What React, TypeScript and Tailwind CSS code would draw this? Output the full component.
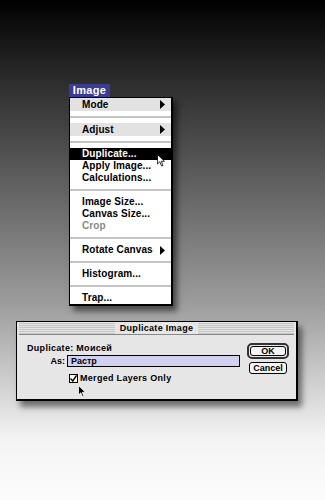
import React from 'react';

const font = { fontFamily: '"Liberation Sans", "Noto Sans", sans-serif' };

function Arrow() {
  return (
    <svg width="5" height="9" viewBox="0 0 5 9" className="ml-auto mr-[6px] shrink-0">
      <path d="M0 0 L5 4.5 L0 9 Z" fill="#000" />
    </svg>
  );
}

function Sep() {
  return (
    <div className="flex flex-col">
      <div className="h-[5px]" />
      <div className="h-[2px] bg-[#c4c4c4]" />
      <div className="h-[5px]" />
    </div>
  );
}

function Item({ label, sub, dim }: { label: string; sub?: boolean; dim?: boolean }) {
  return (
    <div className={`flex items-center h-[12px] pl-[12px] text-[10px] font-bold leading-none tracking-[0.1px] ${dim ? 'text-[#8a8a8a]' : 'text-black'}`}>
      <span>{label}</span>
      {sub && <Arrow />}
    </div>
  );
}

function Cursor({ white }: { white?: boolean }) {
  return (
    <svg width="9" height="13" viewBox="0 0 9 13">
      <path
        d="M0.5 0.5 L0.5 10 L2.8 7.8 L4.6 12 L6 11.4 L4.3 7.3 L7.5 7.3 Z"
        fill={white ? '#fff' : '#000'}
        stroke={white ? '#000' : '#fff'}
        strokeWidth="0.8"
      />
    </svg>
  );
}

export default function App() {
  return (
    <div
      className="w-[325px] h-[500px] overflow-hidden bg-[linear-gradient(to_bottom,#000000_0%,#2c2c2c_16%,#9a9a9a_60%,#f4f4f4_88%,#fcfcfc_100%)]"
      style={font}
    >
      {/* menu */}
      <div className="pt-[84px] pl-[69px] flex flex-col items-start">
        <div className="w-[41px] h-[13px] bg-[#3c3c94] text-white text-[11px] font-bold flex items-center justify-center leading-none tracking-[0.3px]">
          Image
        </div>
        <div className="w-[104px] bg-white border border-black border-r-2 border-b-2 shadow-[4px_5px_6px_rgba(0,0,0,0.55)] flex flex-col">
          <div className="h-[13px] bg-[#e2e2e2] flex items-center pl-[12px] text-[10px] font-bold leading-none tracking-[0.1px]">
            <span>Mode</span>
            <Arrow />
          </div>
          <Sep />
          <div className="h-[13px] bg-[#e2e2e2] flex items-center pl-[12px] text-[10px] font-bold leading-none tracking-[0.1px]">
            <span>Adjust</span>
            <Arrow />
          </div>
          <Sep />
          <div className="relative flex items-center h-[12px] pl-[12px] bg-black text-white text-[10px] font-bold leading-none tracking-[0.1px]">
            <span>Duplicate...</span>
            <div className="absolute left-[87px] top-[6px]">
              <Cursor white />
            </div>
          </div>
          <Item label="Apply Image..." />
          <Item label="Calculations..." />
          <Sep />
          <Item label="Image Size..." />
          <Item label="Canvas Size..." />
          <Item label="Crop" dim />
          <Sep />
          <Item label="Rotate Canvas" sub />
          <Sep />
          <Item label="Histogram..." />
          <Sep />
          <Item label="Trap..." />
        </div>
      </div>

      {/* dialog */}
      <div className="mt-[15px] ml-[16px] w-[282px] h-[80px] bg-[#e6e6e6] border border-black border-r-2 border-b-2 shadow-[4px_6px_6px_rgba(0,0,0,0.5)] flex flex-col">
        <div className="h-[12px] mx-[2px] mt-[1px] flex items-center bg-[repeating-linear-gradient(to_bottom,#c4c4c4_0px,#c4c4c4_1px,#e6e6e6_1px,#e6e6e6_2px)] border-b border-[#888]">
          <div className="mx-auto px-[5px] bg-[#e6e6e6] text-[9px] font-bold leading-none tracking-[0.3px] h-full flex items-center">
            Duplicate Image
          </div>
        </div>
        <div className="flex flex-1">
          <div className="flex flex-col pl-[10px] pt-[9px]">
            <div className="text-[9px] font-bold leading-none tracking-[0.3px] h-[10px]">
              Duplicate: Моисей
            </div>
            <div className="flex items-center mt-[1px] h-[12px]">
              <div className="w-[40px] text-right text-[9px] font-bold leading-none pr-[2px]">As:</div>
              <div className="w-[173px] h-[12px] border border-black bg-[#d2d2f0] text-[9px] font-bold leading-none flex items-center pl-[3px]">
                Растр
              </div>
            </div>
            <div className="flex items-center mt-[6px] pl-[42px] h-[10px]">
              <div className="w-[9px] h-[9px] border border-black bg-white flex items-center justify-center">
                <svg width="7" height="7" viewBox="0 0 7 7">
                  <path d="M0.5 3.5 L2.8 6 L6.5 0.5" stroke="#000" strokeWidth="1.4" fill="none" />
                </svg>
              </div>
              <span className="ml-[2px] text-[9px] font-bold leading-none tracking-[0.3px]">Merged Layers Only</span>
            </div>
            <div className="pl-[51px] mt-[2px]">
              <Cursor />
            </div>
          </div>
          <div className="ml-auto mr-[7px] pt-[8px] flex flex-col items-center">
            <div className="w-[42px] h-[16px] border-2 border-[#333] rounded-[5px] p-[1px] bg-[#e6e6e6]">
              <div className="w-full h-full border border-black rounded-[3px] bg-[#f4f4f4] flex items-center justify-center text-[9px] font-bold leading-none">
                OK
              </div>
            </div>
            <div className="mt-[3px] w-[38px] h-[12px] border border-black rounded-[3px] bg-[#f4f4f4] flex items-center justify-center text-[9px] font-bold leading-none">
              Cancel
            </div>
          </div>
        </div>
      </div>
    </div>
  );
}
